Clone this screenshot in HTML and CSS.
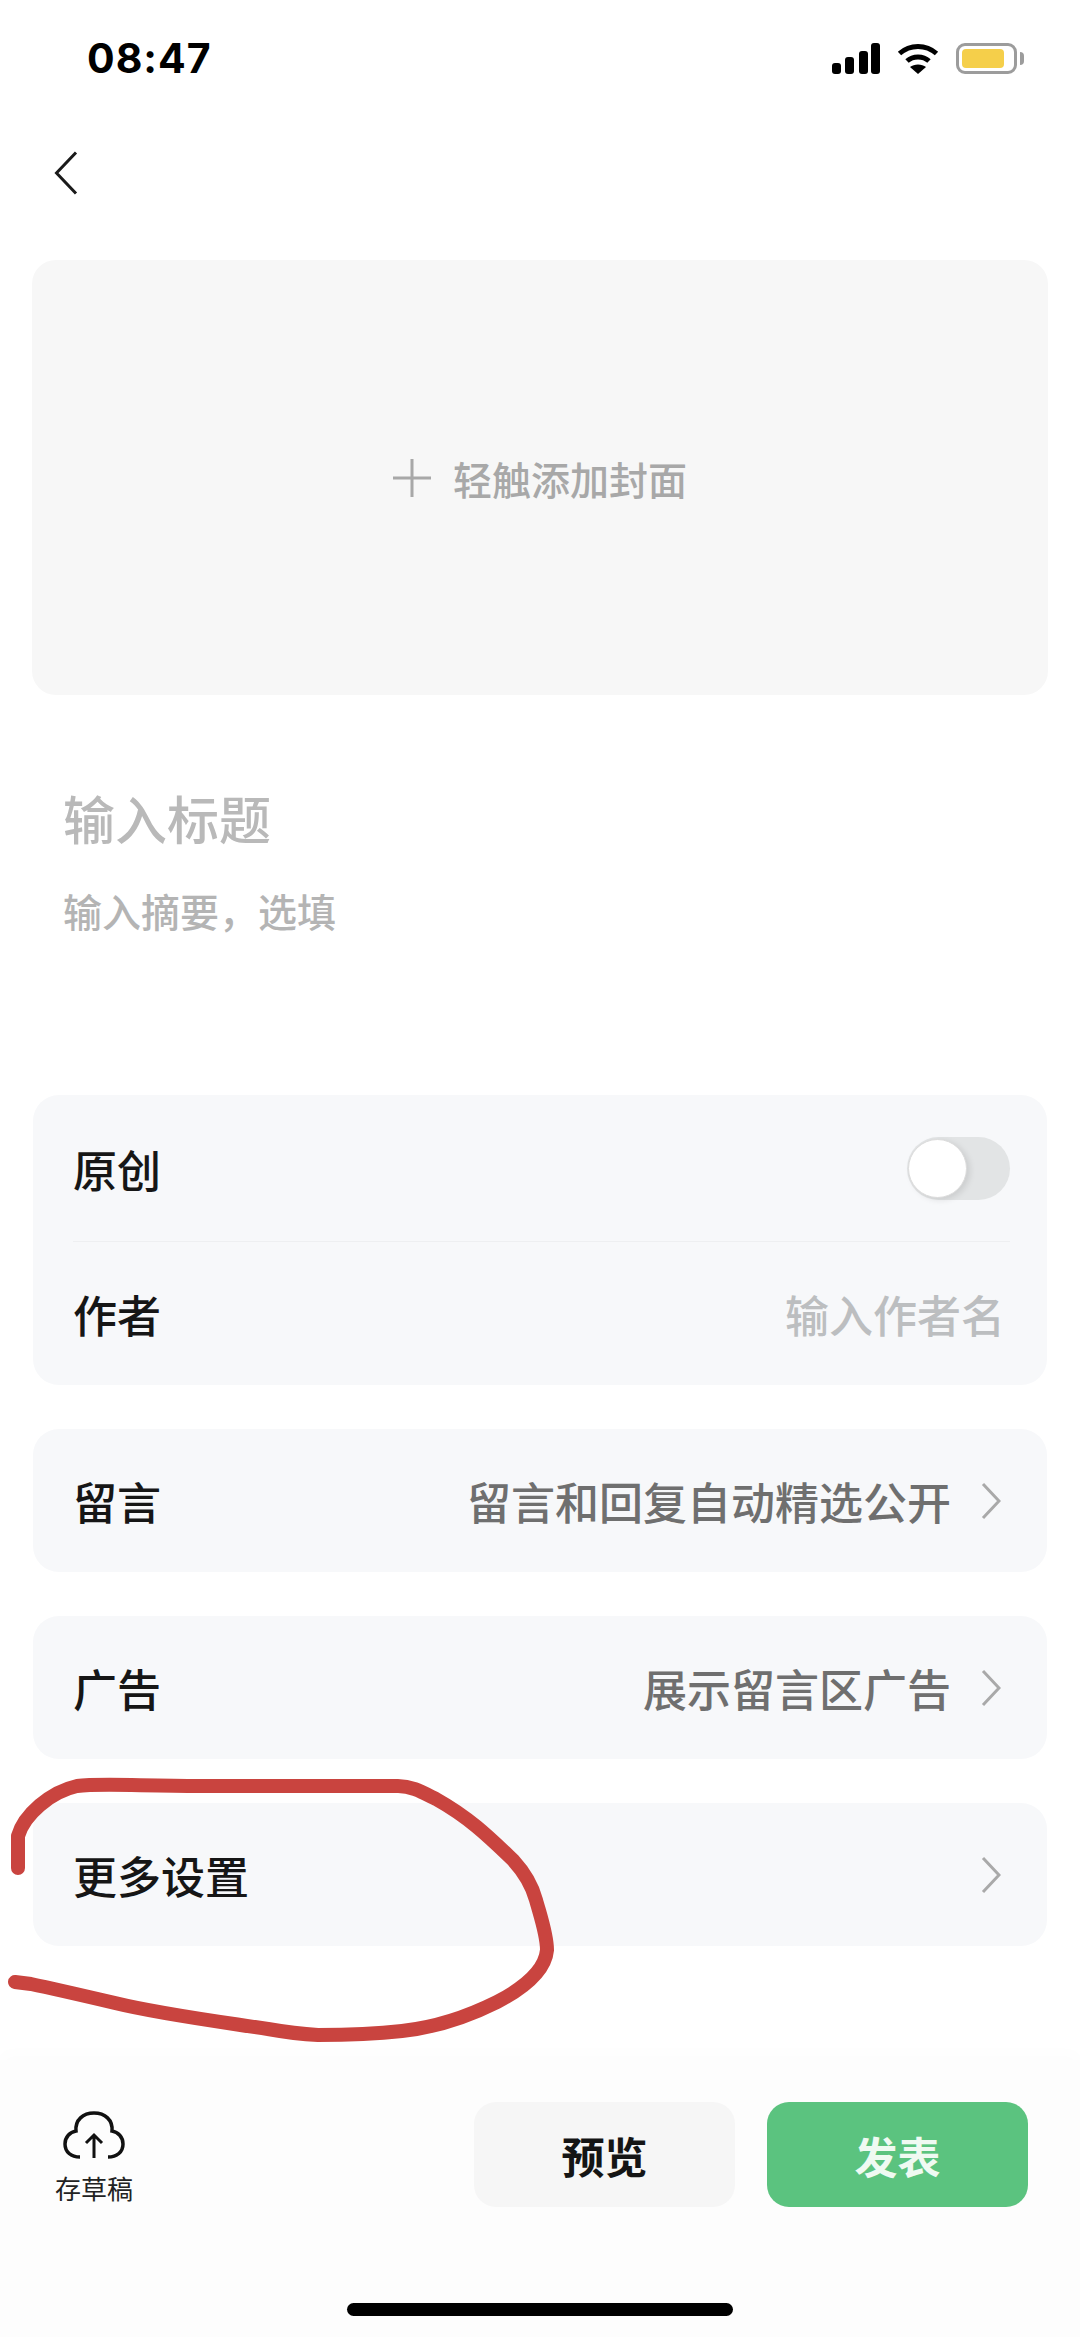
FILE: index.html
```html
<!DOCTYPE html>
<html lang="zh-CN">
  <head>
    <meta charset="UTF-8" />
    <meta name="viewport" content="width=device-width, initial-scale=1.0" />
    <title>发表</title>
    <link rel="stylesheet" href="styles.css">
  </head>
  <body>
    <div class="page">
      <!-- Barra de estado -->
      <div class="status-bar">
        <span class="clock">08:47</span>
        <div class="status-icons">
          <svg class="signal" viewBox="0 0 48 31">
            <rect x="0" y="20" width="9" height="11" rx="3" />
            <rect x="13" y="14" width="9" height="17" rx="3" />
            <rect x="27" y="8" width="9" height="23" rx="3" />
            <rect x="39" y="0" width="9" height="31" rx="3" />
          </svg>
          <svg class="wifi" viewBox="0 0 42 31">
            <path d="M2.5 10.5C13 1 29 1 39.5 10.5" fill="none" stroke="#000" stroke-width="5" />
            <path d="M10 18C16 12.5 26 12.5 32 18" fill="none" stroke="#000" stroke-width="5" />
            <path d="M13 24C17 20.5 25 20.5 29 24L21 31Z" />
          </svg>
          <div class="battery"><div class="battery-level"></div></div>
        </div>
      </div>

      <div class="nav">
        <svg class="back" viewBox="0 0 24 44">
          <path d="M22 1.5L2.5 22L22 42.5" fill="none" stroke="#1a1a1a" stroke-width="3" />
        </svg>
      </div>

      <div class="cover">
        <svg class="plus" viewBox="0 0 38 38">
          <path d="M19 0V38M0 19H38" stroke="#a8a8a8" stroke-width="3" />
        </svg>
        <span>轻触添加封面</span>
      </div>

      <div class="article-title">输入标题</div>
      <div class="article-summary">输入摘要，选填</div>

      <div class="group group-first">
        <div class="row row-divided">
          <span class="row-label">原创</span>
          <div class="toggle"><div class="toggle-knob"></div></div>
        </div>
        <div class="row">
          <span class="row-label">作者</span>
          <span class="row-placeholder">输入作者名</span>
        </div>
      </div>

      <div class="group">
        <div class="row">
          <span class="row-label">留言</span>
          <span class="row-value">留言和回复自动精选公开</span>
          <svg class="chevron" viewBox="0 0 20 38"><path d="M2 2L18 19L2 36" /></svg>
        </div>
      </div>

      <div class="group">
        <div class="row">
          <span class="row-label">广告</span>
          <span class="row-value">展示留言区广告</span>
          <svg class="chevron" viewBox="0 0 20 38"><path d="M2 2L18 19L2 36" /></svg>
        </div>
      </div>

      <div class="group">
        <div class="row">
          <span class="row-label">更多设置</span>
          <span class="row-value"></span>
          <svg class="chevron" viewBox="0 0 20 38"><path d="M2 2L18 19L2 36" /></svg>
        </div>
      </div>

      <div class="bottom-bar">
        <div class="actions">
          <div class="draft">
            <svg class="cloud" viewBox="0 0 62 48">
              <path d="M17 46C8 46 2 41 2 33C2 26 7 21 13 20C12 9 20 2 31 2C42 2 50 9 49 20C55 21 60 26 60 33C60 41 54 46 45 46" fill="none" stroke="#111" stroke-width="3.5" />
              <path d="M31 47V25M23 32L31 24L39 32" fill="none" stroke="#111" stroke-width="3" />
            </svg>
            <span>存草稿</span>
          </div>
          <div class="btn btn-preview">预览</div>
          <div class="btn btn-publish">发表</div>
        </div>
        <div class="home-bar"></div>
      </div>

      <!-- Trazo rojo a mano sobre la captura -->
      <svg class="scribble" viewBox="0 0 1080 2337">
        <path d="M18 1868V1836C24 1815 50 1792 77 1786C100 1783 140 1786 200 1786H398C412 1786 422 1792 436 1799C470 1818 490 1838 513 1860C524 1872 532 1885 536 1900C541 1918 547 1935 547 1950C545 1972 520 1990 497 2002C465 2018 430 2028 402 2031C375 2034 345 2035 318 2035C300 2034 285 2032 268 2029C215 2021 160 2014 115 2003C85 1996 55 1989 31 1984L15 1982" />
      </svg>
    </div>
  </body>
</html>
```

FILE: styles.css
```css
* {
  margin: 0;
  padding: 0;
  box-sizing: border-box;
}

body {
  font-family: "Noto Sans CJK SC", "Noto Sans", sans-serif;
  background: white;
}

.page {
  position: relative;
  width: 1080px;
  height: 2337px;
  overflow: hidden;
  display: flex;
  flex-direction: column;
  background: white;
}

.status-bar {
  height: 116px;
  padding: 0 57px 0 87px;
  display: flex;
  align-items: center;
  justify-content: space-between;
}

.clock {
  font-family: Inter, "Liberation Sans", sans-serif;
  font-size: 41px;
  font-weight: 700;
  letter-spacing: 1px;
  color: black;
}

.status-icons {
  display: flex;
  align-items: center;
}

.signal {
  width: 48px;
  height: 31px;
  margin-right: 17px;
}

.wifi {
  width: 42px;
  height: 31px;
  margin-right: 17px;
}

.battery {
  position: relative;
  width: 61px;
  height: 31px;
  padding: 3px;
  border: 3px solid #9c9c9c;
  border-radius: 9px;
  margin-right: 6px;
}

.battery::after {
  content: "";
  position: absolute;
  top: 6px;
  right: -10px;
  width: 4px;
  height: 13px;
  border-radius: 0 4px 4px 0;
  background: #9c9c9c;
}

.battery-level {
  width: 42px;
  height: 100%;
  border-radius: 4px;
  background: #f5cf4a;
}

.nav {
  height: 144px;
  padding: 35px 0 0 54px;
}

.back {
  display: block;
  width: 24px;
  height: 44px;
}

.cover {
  height: 435px;
  margin: 0 32px;
  display: flex;
  align-items: center;
  justify-content: center;
  gap: 22px;
  background: #f7f7f7;
  border-radius: 24px;
  color: #a8a8a8;
  font-size: 39px;
  font-weight: 500;
}

.plus {
  width: 38px;
  height: 38px;
}

.article-title {
  margin: 88px 0 0 63px;
  height: 70px;
  line-height: 70px;
  font-size: 52px;
  font-weight: 500;
  color: #b9b9b9;
}

.article-summary {
  margin: 29px 0 0 63px;
  height: 56px;
  line-height: 56px;
  font-size: 39px;
  font-weight: 500;
  color: #b4b4b4;
}

.group {
  margin: 44px 33px 0;
  background: #f7f8fa;
  border-radius: 26px;
}

.group-first {
  margin-top: 157px;
}

.row {
  position: relative;
  height: 143px;
  padding: 0 46px 0 40px;
  display: flex;
  align-items: center;
  justify-content: space-between;
}

.row-divided {
  height: 147px;
  padding-right: 37px;
}

.row-divided::after {
  content: "";
  position: absolute;
  left: 40px;
  right: 37px;
  bottom: 0;
  height: 1px;
  background: #eeeff1;
}

.row-label {
  font-size: 44px;
  font-weight: 500;
  color: #161616;
}

.row-value {
  flex: 1;
  text-align: right;
  margin-right: 30px;
  font-size: 44px;
  color: #6f6f6f;
  font-weight: 500;
}

.row-placeholder {
  margin-right: -4px;
  font-size: 44px;
  color: #bcbec0;
  font-weight: 500;
}

.chevron {
  width: 20px;
  height: 38px;
  fill: none;
  stroke: #a9a9a9;
  stroke-width: 3;
}

.toggle {
  width: 103px;
  height: 63px;
  border-radius: 32px;
  background: #e2e4e5;
}

.toggle-knob {
  width: 59px;
  height: 59px;
  margin-top: 2px;
  margin-left: 1px;
  border-radius: 50%;
  background: white;
  border: 1px solid #dcdcdc;
  box-shadow: 3px 2px 6px rgba(0, 0, 0, 0.1);
}

.bottom-bar {
  margin-top: auto;
  height: 277px;
  padding-top: 42px;
  display: flex;
  flex-direction: column;
  background: #fdfdfd;
  box-shadow: 0 -8px 16px rgba(0, 0, 0, 0.012);
}

.actions {
  height: 105px;
  padding: 0 52px 0 55px;
  display: flex;
  gap: 32px;
}

.draft {
  margin-right: auto;
  padding-top: 9px;
  display: flex;
  flex-direction: column;
  align-items: center;
  font-size: 26px;
  color: #222;
}

.cloud {
  width: 62px;
  height: 48px;
  margin-bottom: 14px;
}

.draft span {
  line-height: 30px;
  width: 78px;
  white-space: nowrap;
}

.btn {
  width: 261px;
  height: 105px;
  display: flex;
  align-items: center;
  justify-content: center;
  border-radius: 22px;
  font-size: 43px;
  font-weight: 700;
}

.btn-preview {
  background: #f6f6f6;
  color: #151515;
}

.btn-publish {
  background: #5bc37f;
  color: #effaf2;
}

.home-bar {
  width: 386px;
  height: 13px;
  margin: 96px auto 0;
  border-radius: 7px;
  background: black;
}

.scribble {
  position: absolute;
  top: 0;
  left: 0;
  width: 1080px;
  height: 2337px;
  fill: none;
  stroke: #c9443f;
  stroke-width: 14;
  stroke-linecap: round;
  stroke-linejoin: round;
  pointer-events: none;
}
```
